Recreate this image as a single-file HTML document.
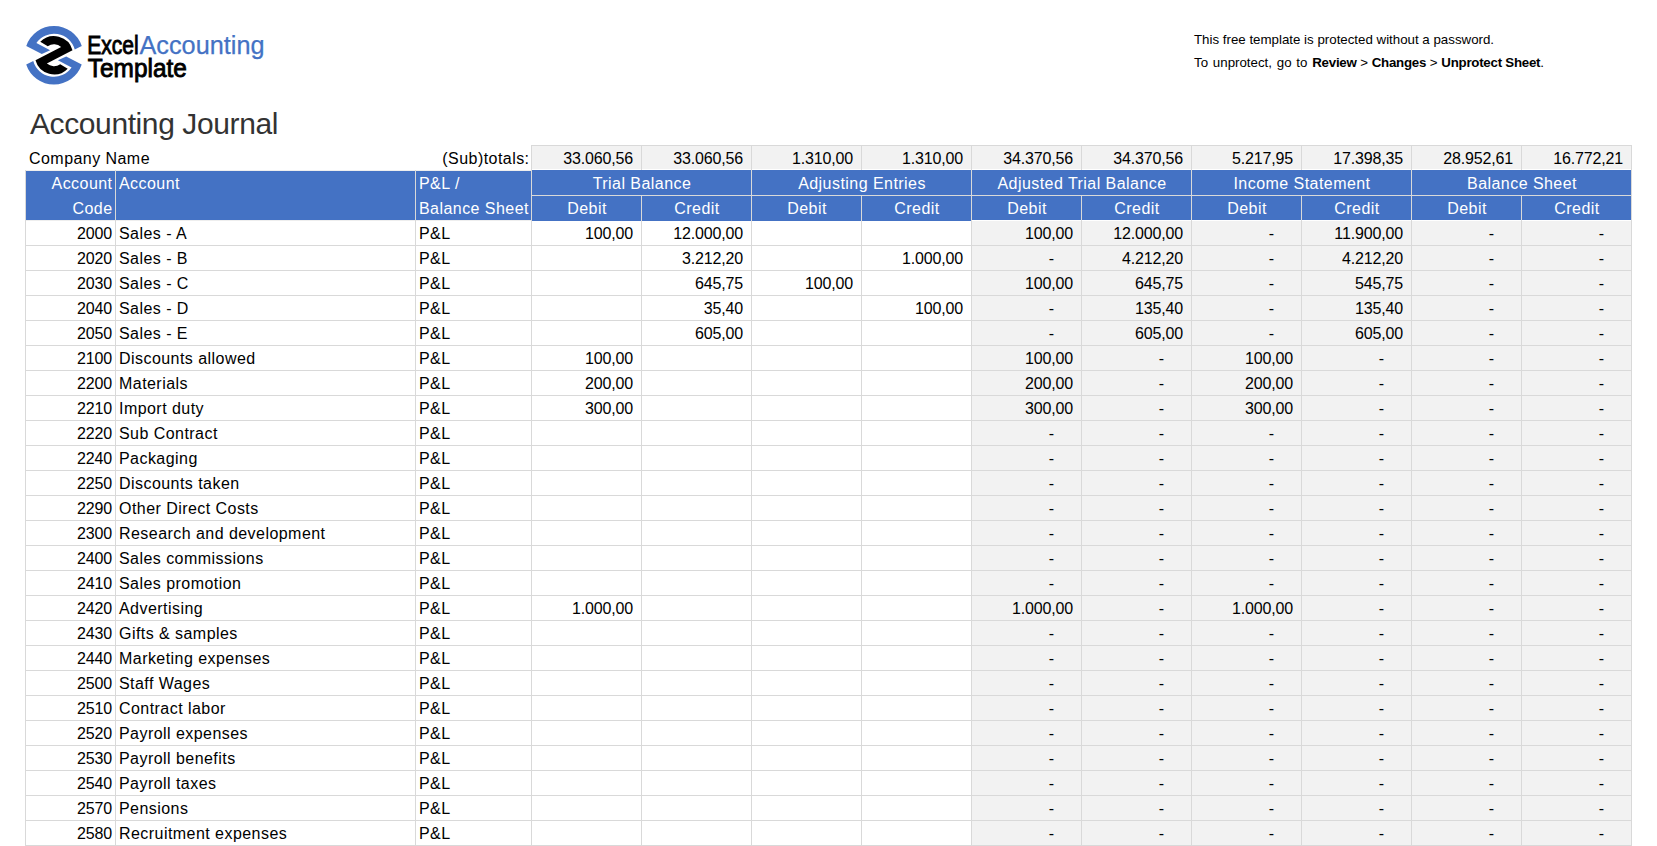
<!DOCTYPE html>
<html><head><meta charset="utf-8">
<style>
html,body{margin:0;padding:0;background:#fff;}
body{width:1657px;height:846px;position:relative;overflow:hidden;font-family:"Liberation Sans",sans-serif;}
.r{position:absolute;}
.t{position:absolute;font-size:16px;line-height:25px;height:25px;white-space:nowrap;color:#000;padding-top:1px;box-sizing:border-box;letter-spacing:0.45px;}
.n{letter-spacing:-0.15px;}
.h{color:#fff;}
.title{position:absolute;left:30px;top:105.5px;font-size:30px;line-height:36px;color:#333;white-space:nowrap;letter-spacing:-0.4px;}
.note b{letter-spacing:-0.25px;}
.note{position:absolute;left:1194px;font-size:13.3px;line-height:16px;white-space:nowrap;color:#000;}
.lg{position:absolute;font-size:24.5px;line-height:28px;white-space:nowrap;letter-spacing:-1.2px;}
</style></head><body>
<svg width="80" height="80" viewBox="-40.00 -40.25 80 80" style="position:absolute;left:14px;top:15px">
<g fill="#4472C4"><path d="M-27.72,-9.33 A29.25,29.25 0 0 1 27.79,-9.14 L20.73,-5.71 A21.5,21.5 0 0 0 -17.59,-12.36 L-3.90,-5.10 L-12.20,-1.30 Z"/><path transform="rotate(180)" d="M-27.72,-9.33 A29.25,29.25 0 0 1 27.79,-9.14 L20.73,-5.71 A21.5,21.5 0 0 0 -17.59,-12.36 L-3.90,-5.10 L-12.20,-1.30 Z"/></g>
<path fill="#000" d="M-13.72,-13.43 A19.2,19.2 0 0 1 18.51,-5.10 L-7.14,8.36 A11.0,11.0 0 0 0 6.23,9.07 L13.72,13.43 A19.2,19.2 0 0 1 -18.51,5.10 L7.14,-8.36 A11.0,11.0 0 0 0 -6.23,-9.07 Z"/>
</svg>
<svg width="1657" height="100" style="position:absolute;left:0;top:0" font-family="Liberation Sans">
<text x="87.2" y="53.7" font-size="26" fill="#000" stroke="#000" stroke-width="0.9" textLength="51.5" lengthAdjust="spacingAndGlyphs">Excel</text>
<text x="139.5" y="53.7" font-size="26" fill="#4472C4" stroke="#4472C4" stroke-width="0.25" textLength="125" lengthAdjust="spacingAndGlyphs">Accounting</text>
<text x="87.8" y="76.6" font-size="26" fill="#000" stroke="#000" stroke-width="0.9" textLength="99" lengthAdjust="spacingAndGlyphs">Template</text>
</svg>
<div class="note" style="top:32px;">This free template is protected without a password.</div>
<div class="note" style="top:55px;"><span style="word-spacing:1.1px">To unprotect, go to </span><b>Review</b> &gt; <b>Changes</b> &gt; <b>Unprotect Sheet</b>.</div>
<div class="title">Accounting Journal</div>
<div class="r" style="left:531px;top:145px;width:1100px;height:25px;background:#F2F2F2"></div>
<div class="r" style="left:971px;top:220px;width:660px;height:625px;background:#F2F2F2"></div>
<div class="r" style="left:25px;top:171px;width:506px;height:49px;background:#4472C4"></div>
<div class="r" style="left:531px;top:170px;width:440px;height:51px;background:#4472C4"></div>
<div class="r" style="left:971px;top:170px;width:660px;height:50px;background:#4472C4"></div>
<div class="r" style="left:25px;top:170px;width:506px;height:1px;background:#EEEEEE"></div>
<div class="r" style="left:25px;top:220px;width:506px;height:1px;background:#EEEEEE"></div>
<div class="r" style="left:531px;top:169px;width:1100px;height:1px;background:#FFFFFF"></div>
<div class="r" style="left:971px;top:220px;width:660px;height:1px;background:#FFFFFF"></div>
<div class="r" style="left:25px;top:245px;width:1607px;height:1px;background:#D9D9D9"></div>
<div class="r" style="left:25px;top:270px;width:1607px;height:1px;background:#D9D9D9"></div>
<div class="r" style="left:25px;top:295px;width:1607px;height:1px;background:#D9D9D9"></div>
<div class="r" style="left:25px;top:320px;width:1607px;height:1px;background:#D9D9D9"></div>
<div class="r" style="left:25px;top:345px;width:1607px;height:1px;background:#D9D9D9"></div>
<div class="r" style="left:25px;top:370px;width:1607px;height:1px;background:#D9D9D9"></div>
<div class="r" style="left:25px;top:395px;width:1607px;height:1px;background:#D9D9D9"></div>
<div class="r" style="left:25px;top:420px;width:1607px;height:1px;background:#D9D9D9"></div>
<div class="r" style="left:25px;top:445px;width:1607px;height:1px;background:#D9D9D9"></div>
<div class="r" style="left:25px;top:470px;width:1607px;height:1px;background:#D9D9D9"></div>
<div class="r" style="left:25px;top:495px;width:1607px;height:1px;background:#D9D9D9"></div>
<div class="r" style="left:25px;top:520px;width:1607px;height:1px;background:#D9D9D9"></div>
<div class="r" style="left:25px;top:545px;width:1607px;height:1px;background:#D9D9D9"></div>
<div class="r" style="left:25px;top:570px;width:1607px;height:1px;background:#D9D9D9"></div>
<div class="r" style="left:25px;top:595px;width:1607px;height:1px;background:#D9D9D9"></div>
<div class="r" style="left:25px;top:620px;width:1607px;height:1px;background:#D9D9D9"></div>
<div class="r" style="left:25px;top:645px;width:1607px;height:1px;background:#D9D9D9"></div>
<div class="r" style="left:25px;top:670px;width:1607px;height:1px;background:#D9D9D9"></div>
<div class="r" style="left:25px;top:695px;width:1607px;height:1px;background:#D9D9D9"></div>
<div class="r" style="left:25px;top:720px;width:1607px;height:1px;background:#D9D9D9"></div>
<div class="r" style="left:25px;top:745px;width:1607px;height:1px;background:#D9D9D9"></div>
<div class="r" style="left:25px;top:770px;width:1607px;height:1px;background:#D9D9D9"></div>
<div class="r" style="left:25px;top:795px;width:1607px;height:1px;background:#D9D9D9"></div>
<div class="r" style="left:25px;top:820px;width:1607px;height:1px;background:#D9D9D9"></div>
<div class="r" style="left:25px;top:845px;width:1607px;height:1px;background:#D9D9D9"></div>
<div class="r" style="left:531px;top:145px;width:1101px;height:1px;background:#D9D9D9"></div>
<div class="r" style="left:531px;top:195px;width:1101px;height:1px;background:#D9D9D9"></div>
<div class="r" style="left:25px;top:170px;width:1px;height:676px;background:#D9D9D9"></div>
<div class="r" style="left:115px;top:170px;width:1px;height:676px;background:#D9D9D9"></div>
<div class="r" style="left:415px;top:170px;width:1px;height:676px;background:#D9D9D9"></div>
<div class="r" style="left:531px;top:145px;width:1px;height:701px;background:#D9D9D9"></div>
<div class="r" style="left:641px;top:145px;width:1px;height:701px;background:#D9D9D9"></div>
<div class="r" style="left:751px;top:145px;width:1px;height:701px;background:#D9D9D9"></div>
<div class="r" style="left:861px;top:145px;width:1px;height:701px;background:#D9D9D9"></div>
<div class="r" style="left:971px;top:145px;width:1px;height:701px;background:#D9D9D9"></div>
<div class="r" style="left:1081px;top:145px;width:1px;height:701px;background:#D9D9D9"></div>
<div class="r" style="left:1191px;top:145px;width:1px;height:701px;background:#D9D9D9"></div>
<div class="r" style="left:1301px;top:145px;width:1px;height:701px;background:#D9D9D9"></div>
<div class="r" style="left:1411px;top:145px;width:1px;height:701px;background:#D9D9D9"></div>
<div class="r" style="left:1521px;top:145px;width:1px;height:701px;background:#D9D9D9"></div>
<div class="r" style="left:1631px;top:145px;width:1px;height:701px;background:#D9D9D9"></div>
<div class="r" style="left:641px;top:170px;width:1px;height:25px;background:#4472C4"></div>
<div class="r" style="left:861px;top:170px;width:1px;height:25px;background:#4472C4"></div>
<div class="r" style="left:1081px;top:170px;width:1px;height:25px;background:#4472C4"></div>
<div class="r" style="left:1301px;top:170px;width:1px;height:25px;background:#4472C4"></div>
<div class="r" style="left:1521px;top:170px;width:1px;height:25px;background:#4472C4"></div>
<div class="t" style="top:145px;left:29px;">Company Name</div>
<div class="t" style="top:145px;left:129.5px;width:400px;text-align:right;">(Sub)totals:</div>
<div class="t n" style="top:145px;left:233px;width:400px;text-align:right;">33.060,56</div>
<div class="t n" style="top:145px;left:343px;width:400px;text-align:right;">33.060,56</div>
<div class="t n" style="top:145px;left:453px;width:400px;text-align:right;">1.310,00</div>
<div class="t n" style="top:145px;left:563px;width:400px;text-align:right;">1.310,00</div>
<div class="t n" style="top:145px;left:673px;width:400px;text-align:right;">34.370,56</div>
<div class="t n" style="top:145px;left:783px;width:400px;text-align:right;">34.370,56</div>
<div class="t n" style="top:145px;left:893px;width:400px;text-align:right;">5.217,95</div>
<div class="t n" style="top:145px;left:1003px;width:400px;text-align:right;">17.398,35</div>
<div class="t n" style="top:145px;left:1113px;width:400px;text-align:right;">28.952,61</div>
<div class="t n" style="top:145px;left:1223px;width:400px;text-align:right;">16.772,21</div>
<div class="t h" style="top:170px;left:-287.5px;width:400px;text-align:right;">Account</div>
<div class="t h" style="top:195px;left:-287.5px;width:400px;text-align:right;">Code</div>
<div class="t h" style="top:170px;left:119px;">Account</div>
<div class="t h" style="top:170px;left:419px;">P&amp;L /</div>
<div class="t h" style="top:195px;left:419px;">Balance Sheet</div>
<div class="t h" style="top:170px;left:442.0px;width:400px;text-align:center;">Trial Balance</div>
<div class="t h" style="top:195px;left:387.0px;width:400px;text-align:center;">Debit</div>
<div class="t h" style="top:195px;left:497.0px;width:400px;text-align:center;">Credit</div>
<div class="t h" style="top:170px;left:662.0px;width:400px;text-align:center;">Adjusting Entries</div>
<div class="t h" style="top:195px;left:607.0px;width:400px;text-align:center;">Debit</div>
<div class="t h" style="top:195px;left:717.0px;width:400px;text-align:center;">Credit</div>
<div class="t h" style="top:170px;left:882.0px;width:400px;text-align:center;">Adjusted Trial Balance</div>
<div class="t h" style="top:195px;left:827.0px;width:400px;text-align:center;">Debit</div>
<div class="t h" style="top:195px;left:937.0px;width:400px;text-align:center;">Credit</div>
<div class="t h" style="top:170px;left:1102.0px;width:400px;text-align:center;">Income Statement</div>
<div class="t h" style="top:195px;left:1047.0px;width:400px;text-align:center;">Debit</div>
<div class="t h" style="top:195px;left:1157.0px;width:400px;text-align:center;">Credit</div>
<div class="t h" style="top:170px;left:1322.0px;width:400px;text-align:center;">Balance Sheet</div>
<div class="t h" style="top:195px;left:1267.0px;width:400px;text-align:center;">Debit</div>
<div class="t h" style="top:195px;left:1377.0px;width:400px;text-align:center;">Credit</div>
<div class="t n" style="top:220px;left:-288px;width:400px;text-align:right;">2000</div>
<div class="t" style="top:220px;left:119px;">Sales - A</div>
<div class="t" style="top:220px;left:419px;">P&amp;L</div>
<div class="t n" style="top:220px;left:233px;width:400px;text-align:right;">100,00</div>
<div class="t n" style="top:220px;left:343px;width:400px;text-align:right;">12.000,00</div>
<div class="t n" style="top:220px;left:673px;width:400px;text-align:right;">100,00</div>
<div class="t n" style="top:220px;left:783px;width:400px;text-align:right;">12.000,00</div>
<div class="t n" style="top:220px;left:874px;width:400px;text-align:right;">-</div>
<div class="t n" style="top:220px;left:1003px;width:400px;text-align:right;">11.900,00</div>
<div class="t n" style="top:220px;left:1094px;width:400px;text-align:right;">-</div>
<div class="t n" style="top:220px;left:1204px;width:400px;text-align:right;">-</div>
<div class="t n" style="top:245px;left:-288px;width:400px;text-align:right;">2020</div>
<div class="t" style="top:245px;left:119px;">Sales - B</div>
<div class="t" style="top:245px;left:419px;">P&amp;L</div>
<div class="t n" style="top:245px;left:343px;width:400px;text-align:right;">3.212,20</div>
<div class="t n" style="top:245px;left:563px;width:400px;text-align:right;">1.000,00</div>
<div class="t n" style="top:245px;left:654px;width:400px;text-align:right;">-</div>
<div class="t n" style="top:245px;left:783px;width:400px;text-align:right;">4.212,20</div>
<div class="t n" style="top:245px;left:874px;width:400px;text-align:right;">-</div>
<div class="t n" style="top:245px;left:1003px;width:400px;text-align:right;">4.212,20</div>
<div class="t n" style="top:245px;left:1094px;width:400px;text-align:right;">-</div>
<div class="t n" style="top:245px;left:1204px;width:400px;text-align:right;">-</div>
<div class="t n" style="top:270px;left:-288px;width:400px;text-align:right;">2030</div>
<div class="t" style="top:270px;left:119px;">Sales - C</div>
<div class="t" style="top:270px;left:419px;">P&amp;L</div>
<div class="t n" style="top:270px;left:343px;width:400px;text-align:right;">645,75</div>
<div class="t n" style="top:270px;left:453px;width:400px;text-align:right;">100,00</div>
<div class="t n" style="top:270px;left:673px;width:400px;text-align:right;">100,00</div>
<div class="t n" style="top:270px;left:783px;width:400px;text-align:right;">645,75</div>
<div class="t n" style="top:270px;left:874px;width:400px;text-align:right;">-</div>
<div class="t n" style="top:270px;left:1003px;width:400px;text-align:right;">545,75</div>
<div class="t n" style="top:270px;left:1094px;width:400px;text-align:right;">-</div>
<div class="t n" style="top:270px;left:1204px;width:400px;text-align:right;">-</div>
<div class="t n" style="top:295px;left:-288px;width:400px;text-align:right;">2040</div>
<div class="t" style="top:295px;left:119px;">Sales - D</div>
<div class="t" style="top:295px;left:419px;">P&amp;L</div>
<div class="t n" style="top:295px;left:343px;width:400px;text-align:right;">35,40</div>
<div class="t n" style="top:295px;left:563px;width:400px;text-align:right;">100,00</div>
<div class="t n" style="top:295px;left:654px;width:400px;text-align:right;">-</div>
<div class="t n" style="top:295px;left:783px;width:400px;text-align:right;">135,40</div>
<div class="t n" style="top:295px;left:874px;width:400px;text-align:right;">-</div>
<div class="t n" style="top:295px;left:1003px;width:400px;text-align:right;">135,40</div>
<div class="t n" style="top:295px;left:1094px;width:400px;text-align:right;">-</div>
<div class="t n" style="top:295px;left:1204px;width:400px;text-align:right;">-</div>
<div class="t n" style="top:320px;left:-288px;width:400px;text-align:right;">2050</div>
<div class="t" style="top:320px;left:119px;">Sales - E</div>
<div class="t" style="top:320px;left:419px;">P&amp;L</div>
<div class="t n" style="top:320px;left:343px;width:400px;text-align:right;">605,00</div>
<div class="t n" style="top:320px;left:654px;width:400px;text-align:right;">-</div>
<div class="t n" style="top:320px;left:783px;width:400px;text-align:right;">605,00</div>
<div class="t n" style="top:320px;left:874px;width:400px;text-align:right;">-</div>
<div class="t n" style="top:320px;left:1003px;width:400px;text-align:right;">605,00</div>
<div class="t n" style="top:320px;left:1094px;width:400px;text-align:right;">-</div>
<div class="t n" style="top:320px;left:1204px;width:400px;text-align:right;">-</div>
<div class="t n" style="top:345px;left:-288px;width:400px;text-align:right;">2100</div>
<div class="t" style="top:345px;left:119px;">Discounts allowed</div>
<div class="t" style="top:345px;left:419px;">P&amp;L</div>
<div class="t n" style="top:345px;left:233px;width:400px;text-align:right;">100,00</div>
<div class="t n" style="top:345px;left:673px;width:400px;text-align:right;">100,00</div>
<div class="t n" style="top:345px;left:764px;width:400px;text-align:right;">-</div>
<div class="t n" style="top:345px;left:893px;width:400px;text-align:right;">100,00</div>
<div class="t n" style="top:345px;left:984px;width:400px;text-align:right;">-</div>
<div class="t n" style="top:345px;left:1094px;width:400px;text-align:right;">-</div>
<div class="t n" style="top:345px;left:1204px;width:400px;text-align:right;">-</div>
<div class="t n" style="top:370px;left:-288px;width:400px;text-align:right;">2200</div>
<div class="t" style="top:370px;left:119px;">Materials</div>
<div class="t" style="top:370px;left:419px;">P&amp;L</div>
<div class="t n" style="top:370px;left:233px;width:400px;text-align:right;">200,00</div>
<div class="t n" style="top:370px;left:673px;width:400px;text-align:right;">200,00</div>
<div class="t n" style="top:370px;left:764px;width:400px;text-align:right;">-</div>
<div class="t n" style="top:370px;left:893px;width:400px;text-align:right;">200,00</div>
<div class="t n" style="top:370px;left:984px;width:400px;text-align:right;">-</div>
<div class="t n" style="top:370px;left:1094px;width:400px;text-align:right;">-</div>
<div class="t n" style="top:370px;left:1204px;width:400px;text-align:right;">-</div>
<div class="t n" style="top:395px;left:-288px;width:400px;text-align:right;">2210</div>
<div class="t" style="top:395px;left:119px;">Import duty</div>
<div class="t" style="top:395px;left:419px;">P&amp;L</div>
<div class="t n" style="top:395px;left:233px;width:400px;text-align:right;">300,00</div>
<div class="t n" style="top:395px;left:673px;width:400px;text-align:right;">300,00</div>
<div class="t n" style="top:395px;left:764px;width:400px;text-align:right;">-</div>
<div class="t n" style="top:395px;left:893px;width:400px;text-align:right;">300,00</div>
<div class="t n" style="top:395px;left:984px;width:400px;text-align:right;">-</div>
<div class="t n" style="top:395px;left:1094px;width:400px;text-align:right;">-</div>
<div class="t n" style="top:395px;left:1204px;width:400px;text-align:right;">-</div>
<div class="t n" style="top:420px;left:-288px;width:400px;text-align:right;">2220</div>
<div class="t" style="top:420px;left:119px;">Sub Contract</div>
<div class="t" style="top:420px;left:419px;">P&amp;L</div>
<div class="t n" style="top:420px;left:654px;width:400px;text-align:right;">-</div>
<div class="t n" style="top:420px;left:764px;width:400px;text-align:right;">-</div>
<div class="t n" style="top:420px;left:874px;width:400px;text-align:right;">-</div>
<div class="t n" style="top:420px;left:984px;width:400px;text-align:right;">-</div>
<div class="t n" style="top:420px;left:1094px;width:400px;text-align:right;">-</div>
<div class="t n" style="top:420px;left:1204px;width:400px;text-align:right;">-</div>
<div class="t n" style="top:445px;left:-288px;width:400px;text-align:right;">2240</div>
<div class="t" style="top:445px;left:119px;">Packaging</div>
<div class="t" style="top:445px;left:419px;">P&amp;L</div>
<div class="t n" style="top:445px;left:654px;width:400px;text-align:right;">-</div>
<div class="t n" style="top:445px;left:764px;width:400px;text-align:right;">-</div>
<div class="t n" style="top:445px;left:874px;width:400px;text-align:right;">-</div>
<div class="t n" style="top:445px;left:984px;width:400px;text-align:right;">-</div>
<div class="t n" style="top:445px;left:1094px;width:400px;text-align:right;">-</div>
<div class="t n" style="top:445px;left:1204px;width:400px;text-align:right;">-</div>
<div class="t n" style="top:470px;left:-288px;width:400px;text-align:right;">2250</div>
<div class="t" style="top:470px;left:119px;">Discounts taken</div>
<div class="t" style="top:470px;left:419px;">P&amp;L</div>
<div class="t n" style="top:470px;left:654px;width:400px;text-align:right;">-</div>
<div class="t n" style="top:470px;left:764px;width:400px;text-align:right;">-</div>
<div class="t n" style="top:470px;left:874px;width:400px;text-align:right;">-</div>
<div class="t n" style="top:470px;left:984px;width:400px;text-align:right;">-</div>
<div class="t n" style="top:470px;left:1094px;width:400px;text-align:right;">-</div>
<div class="t n" style="top:470px;left:1204px;width:400px;text-align:right;">-</div>
<div class="t n" style="top:495px;left:-288px;width:400px;text-align:right;">2290</div>
<div class="t" style="top:495px;left:119px;">Other Direct Costs</div>
<div class="t" style="top:495px;left:419px;">P&amp;L</div>
<div class="t n" style="top:495px;left:654px;width:400px;text-align:right;">-</div>
<div class="t n" style="top:495px;left:764px;width:400px;text-align:right;">-</div>
<div class="t n" style="top:495px;left:874px;width:400px;text-align:right;">-</div>
<div class="t n" style="top:495px;left:984px;width:400px;text-align:right;">-</div>
<div class="t n" style="top:495px;left:1094px;width:400px;text-align:right;">-</div>
<div class="t n" style="top:495px;left:1204px;width:400px;text-align:right;">-</div>
<div class="t n" style="top:520px;left:-288px;width:400px;text-align:right;">2300</div>
<div class="t" style="top:520px;left:119px;">Research and development</div>
<div class="t" style="top:520px;left:419px;">P&amp;L</div>
<div class="t n" style="top:520px;left:654px;width:400px;text-align:right;">-</div>
<div class="t n" style="top:520px;left:764px;width:400px;text-align:right;">-</div>
<div class="t n" style="top:520px;left:874px;width:400px;text-align:right;">-</div>
<div class="t n" style="top:520px;left:984px;width:400px;text-align:right;">-</div>
<div class="t n" style="top:520px;left:1094px;width:400px;text-align:right;">-</div>
<div class="t n" style="top:520px;left:1204px;width:400px;text-align:right;">-</div>
<div class="t n" style="top:545px;left:-288px;width:400px;text-align:right;">2400</div>
<div class="t" style="top:545px;left:119px;">Sales commissions</div>
<div class="t" style="top:545px;left:419px;">P&amp;L</div>
<div class="t n" style="top:545px;left:654px;width:400px;text-align:right;">-</div>
<div class="t n" style="top:545px;left:764px;width:400px;text-align:right;">-</div>
<div class="t n" style="top:545px;left:874px;width:400px;text-align:right;">-</div>
<div class="t n" style="top:545px;left:984px;width:400px;text-align:right;">-</div>
<div class="t n" style="top:545px;left:1094px;width:400px;text-align:right;">-</div>
<div class="t n" style="top:545px;left:1204px;width:400px;text-align:right;">-</div>
<div class="t n" style="top:570px;left:-288px;width:400px;text-align:right;">2410</div>
<div class="t" style="top:570px;left:119px;">Sales promotion</div>
<div class="t" style="top:570px;left:419px;">P&amp;L</div>
<div class="t n" style="top:570px;left:654px;width:400px;text-align:right;">-</div>
<div class="t n" style="top:570px;left:764px;width:400px;text-align:right;">-</div>
<div class="t n" style="top:570px;left:874px;width:400px;text-align:right;">-</div>
<div class="t n" style="top:570px;left:984px;width:400px;text-align:right;">-</div>
<div class="t n" style="top:570px;left:1094px;width:400px;text-align:right;">-</div>
<div class="t n" style="top:570px;left:1204px;width:400px;text-align:right;">-</div>
<div class="t n" style="top:595px;left:-288px;width:400px;text-align:right;">2420</div>
<div class="t" style="top:595px;left:119px;">Advertising</div>
<div class="t" style="top:595px;left:419px;">P&amp;L</div>
<div class="t n" style="top:595px;left:233px;width:400px;text-align:right;">1.000,00</div>
<div class="t n" style="top:595px;left:673px;width:400px;text-align:right;">1.000,00</div>
<div class="t n" style="top:595px;left:764px;width:400px;text-align:right;">-</div>
<div class="t n" style="top:595px;left:893px;width:400px;text-align:right;">1.000,00</div>
<div class="t n" style="top:595px;left:984px;width:400px;text-align:right;">-</div>
<div class="t n" style="top:595px;left:1094px;width:400px;text-align:right;">-</div>
<div class="t n" style="top:595px;left:1204px;width:400px;text-align:right;">-</div>
<div class="t n" style="top:620px;left:-288px;width:400px;text-align:right;">2430</div>
<div class="t" style="top:620px;left:119px;">Gifts &amp; samples</div>
<div class="t" style="top:620px;left:419px;">P&amp;L</div>
<div class="t n" style="top:620px;left:654px;width:400px;text-align:right;">-</div>
<div class="t n" style="top:620px;left:764px;width:400px;text-align:right;">-</div>
<div class="t n" style="top:620px;left:874px;width:400px;text-align:right;">-</div>
<div class="t n" style="top:620px;left:984px;width:400px;text-align:right;">-</div>
<div class="t n" style="top:620px;left:1094px;width:400px;text-align:right;">-</div>
<div class="t n" style="top:620px;left:1204px;width:400px;text-align:right;">-</div>
<div class="t n" style="top:645px;left:-288px;width:400px;text-align:right;">2440</div>
<div class="t" style="top:645px;left:119px;">Marketing expenses</div>
<div class="t" style="top:645px;left:419px;">P&amp;L</div>
<div class="t n" style="top:645px;left:654px;width:400px;text-align:right;">-</div>
<div class="t n" style="top:645px;left:764px;width:400px;text-align:right;">-</div>
<div class="t n" style="top:645px;left:874px;width:400px;text-align:right;">-</div>
<div class="t n" style="top:645px;left:984px;width:400px;text-align:right;">-</div>
<div class="t n" style="top:645px;left:1094px;width:400px;text-align:right;">-</div>
<div class="t n" style="top:645px;left:1204px;width:400px;text-align:right;">-</div>
<div class="t n" style="top:670px;left:-288px;width:400px;text-align:right;">2500</div>
<div class="t" style="top:670px;left:119px;">Staff Wages</div>
<div class="t" style="top:670px;left:419px;">P&amp;L</div>
<div class="t n" style="top:670px;left:654px;width:400px;text-align:right;">-</div>
<div class="t n" style="top:670px;left:764px;width:400px;text-align:right;">-</div>
<div class="t n" style="top:670px;left:874px;width:400px;text-align:right;">-</div>
<div class="t n" style="top:670px;left:984px;width:400px;text-align:right;">-</div>
<div class="t n" style="top:670px;left:1094px;width:400px;text-align:right;">-</div>
<div class="t n" style="top:670px;left:1204px;width:400px;text-align:right;">-</div>
<div class="t n" style="top:695px;left:-288px;width:400px;text-align:right;">2510</div>
<div class="t" style="top:695px;left:119px;">Contract labor</div>
<div class="t" style="top:695px;left:419px;">P&amp;L</div>
<div class="t n" style="top:695px;left:654px;width:400px;text-align:right;">-</div>
<div class="t n" style="top:695px;left:764px;width:400px;text-align:right;">-</div>
<div class="t n" style="top:695px;left:874px;width:400px;text-align:right;">-</div>
<div class="t n" style="top:695px;left:984px;width:400px;text-align:right;">-</div>
<div class="t n" style="top:695px;left:1094px;width:400px;text-align:right;">-</div>
<div class="t n" style="top:695px;left:1204px;width:400px;text-align:right;">-</div>
<div class="t n" style="top:720px;left:-288px;width:400px;text-align:right;">2520</div>
<div class="t" style="top:720px;left:119px;">Payroll expenses</div>
<div class="t" style="top:720px;left:419px;">P&amp;L</div>
<div class="t n" style="top:720px;left:654px;width:400px;text-align:right;">-</div>
<div class="t n" style="top:720px;left:764px;width:400px;text-align:right;">-</div>
<div class="t n" style="top:720px;left:874px;width:400px;text-align:right;">-</div>
<div class="t n" style="top:720px;left:984px;width:400px;text-align:right;">-</div>
<div class="t n" style="top:720px;left:1094px;width:400px;text-align:right;">-</div>
<div class="t n" style="top:720px;left:1204px;width:400px;text-align:right;">-</div>
<div class="t n" style="top:745px;left:-288px;width:400px;text-align:right;">2530</div>
<div class="t" style="top:745px;left:119px;">Payroll benefits</div>
<div class="t" style="top:745px;left:419px;">P&amp;L</div>
<div class="t n" style="top:745px;left:654px;width:400px;text-align:right;">-</div>
<div class="t n" style="top:745px;left:764px;width:400px;text-align:right;">-</div>
<div class="t n" style="top:745px;left:874px;width:400px;text-align:right;">-</div>
<div class="t n" style="top:745px;left:984px;width:400px;text-align:right;">-</div>
<div class="t n" style="top:745px;left:1094px;width:400px;text-align:right;">-</div>
<div class="t n" style="top:745px;left:1204px;width:400px;text-align:right;">-</div>
<div class="t n" style="top:770px;left:-288px;width:400px;text-align:right;">2540</div>
<div class="t" style="top:770px;left:119px;">Payroll taxes</div>
<div class="t" style="top:770px;left:419px;">P&amp;L</div>
<div class="t n" style="top:770px;left:654px;width:400px;text-align:right;">-</div>
<div class="t n" style="top:770px;left:764px;width:400px;text-align:right;">-</div>
<div class="t n" style="top:770px;left:874px;width:400px;text-align:right;">-</div>
<div class="t n" style="top:770px;left:984px;width:400px;text-align:right;">-</div>
<div class="t n" style="top:770px;left:1094px;width:400px;text-align:right;">-</div>
<div class="t n" style="top:770px;left:1204px;width:400px;text-align:right;">-</div>
<div class="t n" style="top:795px;left:-288px;width:400px;text-align:right;">2570</div>
<div class="t" style="top:795px;left:119px;">Pensions</div>
<div class="t" style="top:795px;left:419px;">P&amp;L</div>
<div class="t n" style="top:795px;left:654px;width:400px;text-align:right;">-</div>
<div class="t n" style="top:795px;left:764px;width:400px;text-align:right;">-</div>
<div class="t n" style="top:795px;left:874px;width:400px;text-align:right;">-</div>
<div class="t n" style="top:795px;left:984px;width:400px;text-align:right;">-</div>
<div class="t n" style="top:795px;left:1094px;width:400px;text-align:right;">-</div>
<div class="t n" style="top:795px;left:1204px;width:400px;text-align:right;">-</div>
<div class="t n" style="top:820px;left:-288px;width:400px;text-align:right;">2580</div>
<div class="t" style="top:820px;left:119px;">Recruitment expenses</div>
<div class="t" style="top:820px;left:419px;">P&amp;L</div>
<div class="t n" style="top:820px;left:654px;width:400px;text-align:right;">-</div>
<div class="t n" style="top:820px;left:764px;width:400px;text-align:right;">-</div>
<div class="t n" style="top:820px;left:874px;width:400px;text-align:right;">-</div>
<div class="t n" style="top:820px;left:984px;width:400px;text-align:right;">-</div>
<div class="t n" style="top:820px;left:1094px;width:400px;text-align:right;">-</div>
<div class="t n" style="top:820px;left:1204px;width:400px;text-align:right;">-</div>
</body></html>
